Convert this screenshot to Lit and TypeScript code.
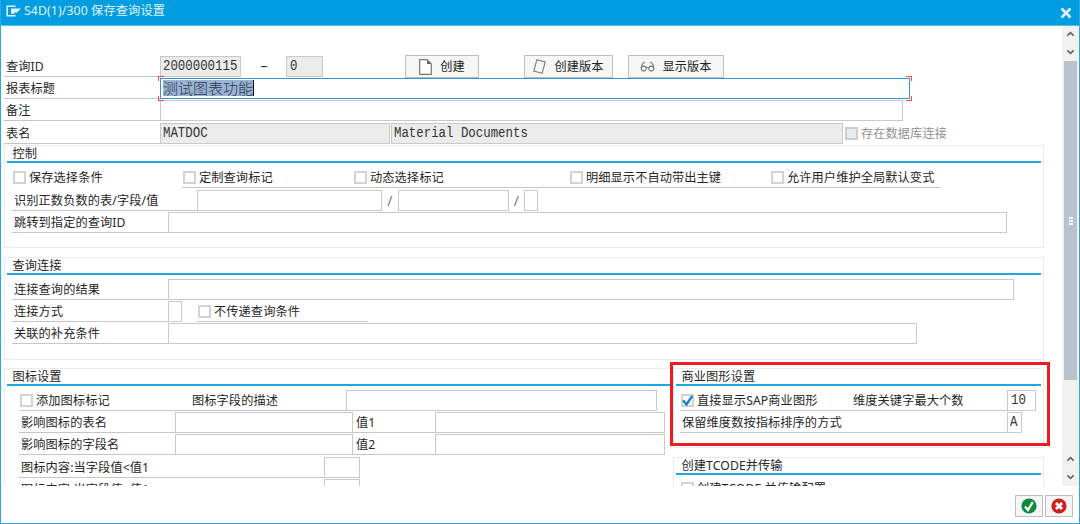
import { LitElement, html, css, nothing } from "lit";
import { customElement, property } from "lit/decorators.js";
import { styleMap } from "lit/directives/style-map.js";

type Kind = "label" | "plain" | "field" | "locked" | "check" | "slash" | "dash";
interface Cell {
  kind: Kind;
  w: number;
  gap?: number;
  text?: string;
  pad?: number;
  on?: boolean;
  off?: boolean;
  line?: boolean;
}
interface Row {
  h?: number;
  cells: Cell[];
}

const label = (gap: number, w: number, text = "", pad = 2): Cell => ({ kind: "label", gap, w, text, pad });
const field = (gap: number, w: number, text = "", pad = 2): Cell => ({ kind: "field", gap, w, text, pad });
const check = (gap: number, w: number, text: string, line = true, on = false): Cell => ({
  kind: "check", gap, w, text, line, on,
});

@customElement("form-rows")
class FormRows extends LitElement {
  @property({ attribute: false }) rows: Row[] = [];

  static styles = css`
    :host { display: block; }
    .row { display: flex; align-items: flex-end; height: 22px; }
    .cell { flex: none; box-sizing: border-box; height: 21px; line-height: 21px; white-space: pre; }
    .label, .check { border-bottom: 1px solid transparent; }
    .label, .line { border-bottom-color: #c6c6c6; }
    .field, .locked {
      border: 1px solid #c9c9c9;
      background: #fff;
      padding-left: 2px;
      font: 12.4px/21px "Liberation Mono", "Noto Sans CJK SC", monospace;
      letter-spacing: 0;
      color: #333;
    }
    .value { display: inline-block; transform: scaleY(1.16); }
    .locked { background: #ebebeb; }
    .slash, .dash { text-align: center; color: #777; font-size: 14px; }
    .dash { color: #333; line-height: 19px; }
    .check { display: flex; align-items: center; gap: 3px; padding-top: 1px; }
    .box {
      flex: none; box-sizing: border-box; width: 13px; height: 13px;
      border: 2px solid #d2d2d2; background: #fff; margin-left: 1px;
    }
    .tick { display: block; width: 13px; height: 13px; margin: -2px; }
    .off { color: #8f8f94; }
    .off .box { background: #e6ebef; border-color: #cdcdcd; }
  `;

  private cell(c: Cell) {
    const size = { width: `${c.w}px`, marginLeft: `${c.gap ?? 0}px`, paddingLeft: c.pad ? `${c.pad}px` : null };
    if (c.kind === "check") {
      return html`<div class="cell check ${c.line ? "line" : ""} ${c.off ? "off" : ""}" style=${styleMap(size)}>
        <span class="box">${c.on
          ? html`<svg class="tick" viewBox="0 0 13 13"><path d="M2 6.2 5.5 10.5 11.3 1.8" fill="none" stroke="#1584cc" stroke-width="2.4"/></svg>`
          : nothing}</span><span>${c.text}</span>
      </div>`;
    }
    if (c.kind === "field" || c.kind === "locked") {
      return html`<div class="cell ${c.kind}" style=${styleMap(size)}><span class="value">${c.text}</span></div>`;
    }
    return html`<div class="cell ${c.kind}" style=${styleMap(size)}>${c.text}</div>`;
  }

  render() {
    return this.rows.map(
      (r) => html`<div class="row" style=${styleMap({ height: r.h ? `${r.h}px` : null })}>${r.cells.map((c) => this.cell(c))}</div>`
    );
  }
}

@customElement("form-group")
class FormGroup extends LitElement {
  @property() heading = "";

  static styles = css`
    :host { display: block; box-sizing: border-box; border: 1px solid #ebebeb; }
    .head {
      height: 15px; line-height: 16px; margin: 0 2px; padding-left: 5.5px;
      border-bottom: 2px solid #1ea6e3; white-space: nowrap;
    }
    .body { padding-top: 3px; }
  `;

  render() {
    return html`<div class="head">${this.heading}</div><div class="body"><slot></slot></div>`;
  }
}

const idRow: Row[] = [{
  cells: [
    label(0, 156, "查询ID"),
    { kind: "locked", w: 81, text: "2000000115" },
    { kind: "dash", w: 14, gap: 16, text: "–" },
    { kind: "locked", w: 37, gap: 15, text: "0", pad: 3 },
  ],
}];

const tailRows: Row[] = [
  { cells: [label(0, 156, "备注"), field(0, 743)] },
  {
    h: 23,
    cells: [
      label(0, 156, "表名"),
      { kind: "locked", w: 230, text: "MATDOC" },
      { kind: "locked", w: 452, gap: 1, text: "Material Documents" },
      { kind: "check", w: 110, gap: 1, text: "存在数据库连接", off: true },
    ],
  },
];

const controlRows: Row[] = [
  {
    cells: [
      check(7, 170, "保存选择条件", false),
      check(0, 171, "定制查询标记"),
      check(0, 216, "动态选择标记"),
      check(0, 201, "明细显示不自动带出主键"),
      check(0, 171, "允许用户维护全局默认变式"),
    ],
  },
  {
    h: 23,
    cells: [
      label(7, 185, "识别正数负数的表/字段/值"),
      field(0, 185),
      { kind: "slash", w: 16, text: "/" },
      field(0, 111),
      { kind: "slash", w: 15, text: "/" },
      field(0, 14),
    ],
  },
  { cells: [label(7, 156, "跳转到指定的查询ID"), field(0, 839)] },
];

const linkRows: Row[] = [
  { cells: [label(7, 156, "连接查询的结果"), field(0, 846)] },
  { cells: [label(7, 156, "连接方式"), field(0, 14), check(15, 171, "不传递查询条件")] },
  { cells: [label(7, 156, "关联的补充条件"), field(0, 749)] },
];

const iconRows: Row[] = [
  { cells: [check(14, 172, "添加图标标记"), label(0, 155, "图标字段的描述", 1), field(0, 311)] },
  { cells: [label(14, 156, "影响图标的表名"), field(0, 178), label(0, 82, "值1", 3), field(0, 230)] },
  { cells: [label(14, 156, "影响图标的字段名"), field(0, 178), label(0, 82, "值2", 3), field(0, 230)] },
  { h: 23, cells: [label(14, 305, "图标内容:当字段值<值1"), field(0, 36)] },
  { cells: [label(14, 305, "图标内容:当字段值=值1"), field(0, 36)] },
];

const chartRows: Row[] = [
  { cells: [check(6, 172, "直接显示SAP商业图形", true, true), label(0, 155, "维度关键字最大个数", 1), field(0, 29, "10", 3)] },
  { cells: [label(6, 327, "保留维度数按指标排序的方式"), field(0, 15, "A")] },
];

const tcodeRows: Row[] = [{ h: 21, cells: [check(6, 200, "创建TCODE 并传输配置", false)] }];

const chevron = (d: string) =>
  html`<svg class="chev" viewBox="0 0 9 6"><path d=${d} fill="none" stroke="#606469" stroke-width="1.6" /></svg>`;
const UP = "M1.3 4.7 4.5 1.7 7.7 4.7";
const DOWN = "M1.3 1.3 4.5 4.3 7.7 1.3";

@customElement("app-root")
class AppRoot extends LitElement {
  static styles = css`
    :host {
      display: flex; flex-direction: column; box-sizing: border-box;
      width: 1080px; height: 524px; overflow: hidden; background: #fff;
      border: 1px solid #2aaae2; border-top: 0;
      font-family: "Noto Sans", "Noto Sans CJK SC", sans-serif;
      font-size: 12.2px; letter-spacing: 0.1px; color: #262626;
    }
    svg { display: block; flex: none; }
    .titlebar {
      flex: none; box-sizing: border-box; height: 26px; margin: 0 -1px; padding: 0 8px 3px 6px;
      display: flex; align-items: center; gap: 3px;
      background: #009de0; border-bottom: 1px solid #55bdea; color: #e4f2f9; line-height: 16px;
    }
    .title { flex: 1; letter-spacing: 0.15px; }
    .logo { width: 15px; height: 12px; }
    .close { width: 12px; height: 12px; margin-top: 3px; }
    .main { flex: none; display: flex; height: 460px; overflow: hidden; }
    .page { flex: none; width: 1061px; box-sizing: border-box; padding: 29px 0 0 3px; position: relative; }
    .line { display: flex; height: 22px; }
    .line.title-line { align-items: flex-end; }
    .caption {
      flex: none; box-sizing: border-box; width: 156px; height: 21px; padding-left: 2px;
      line-height: 21px; border-bottom: 1px solid #c6c6c6;
    }
    .focus {
      position: relative; box-sizing: border-box; width: 750px; height: 21px;
      border: 1px solid #3796d1; padding: 1px 0 0 2px; display: flex;
    }
    .picked {
      height: 16px; line-height: 16px; font-family: "Noto Sans CJK SC", sans-serif; letter-spacing: 0;
      font-size: 15px; font-weight: 300; color: #29374a; background: #9ab3d3; border-right: 1px solid #111;
    }
    .corner { position: absolute; width: 5px; height: 4px; border: 0 solid #f0484f; }
    .tl { left: -3px; top: -3px; border-width: 1px 0 0 1px; }
    .bl { left: -3px; bottom: -3px; border-width: 0 0 1px 1px; }
    .tr { right: -3px; top: -3px; border-width: 1px 1px 0 0; }
    .br { right: -3px; bottom: -3px; border-width: 0 1px 1px 0; }
    .btn {
      flex: none; box-sizing: border-box; height: 23px; display: flex; align-items: center; justify-content: center;
      gap: 8px; border: 1px solid #bdbdbd; background: #f6f6f6; line-height: 20px; color: #222;
    }
    .make { width: 74px; margin-left: 82px; }
    .make-version { width: 89px; margin-left: 45px; }
    .show-version { width: 96px; margin-left: 15px; gap: 7px; }
    .g-control { width: 1040px; height: 103px; margin-top: 1px; }
    .g-link { width: 1040px; height: 103px; margin-top: 9px; }
    .pair { display: flex; width: 1040px; margin-top: 8px; }
    .g-icon { width: 669px; height: 150px; border-right: 0; }
    .side { width: 371px; }
    .g-chart { height: 80px; }
    .g-tcode { height: 60px; margin-top: 9px; }
    .marker {
      position: absolute; left: 669px; top: 336px; box-sizing: border-box; width: 380px; height: 84px;
      border: 3px solid #ed1c24;
    }
    .scroll {
      flex: none; box-sizing: border-box; width: 17px; padding: 5px 0 6px; display: flex; flex-direction: column; align-items: center;
      background: #f1f1f1;
    }
    .chev { width: 9px; height: 6px; margin-bottom: 12px; }
    .chev:last-child { margin-bottom: 0; }
    .thumb {
      flex: none; width: 13px; height: 319px; background: #b7c2ce; margin: -6px 0 auto;
      display: flex; flex-direction: column; align-items: center; justify-content: center; gap: 1px;
    }
    .grip { width: 4px; height: 2px; background: #f2f5f8; }
    .footer { flex: 1; display: flex; justify-content: flex-end; gap: 2px; padding: 9px 6px 0 0; }
    .act { width: 28px; height: 22px; }
    .act svg { width: 16px; height: 16px; }
  `;

  render() {
    return html`
      <div class="titlebar">
        <svg class="logo" viewBox="0 0 15 12">
          <path d="M9.5 1.2H1.2V10.8H9.5" fill="none" stroke="#e4f2f9" stroke-width="1.5" />
          <path d="M5 3.5H15L11 7.5H8.5V8.8H5Z" fill="#e4f2f9" />
        </svg>
        <span class="title">S4D(1)/300 保存查询设置</span>
        <svg class="close" viewBox="0 0 12 12"><path d="M1.5 1.5 10.5 10.5M10.5 1.5 1.5 10.5" stroke="#e4eef4" stroke-width="2.6" /></svg>
      </div>
      <div class="main">
        <div class="page">
          <div class="line">
            <form-rows .rows=${idRow}></form-rows>
            <div class="btn make">
              <svg width="13" height="16" viewBox="0 0 13 16">
                <path d="M.7.7H8L12.3 5V15.3H.7Z" fill="#fff" stroke="#777" stroke-width="1.2" /><path d="M8 .7V5H12.3Z" fill="#666" />
              </svg>
              <span>创建</span>
            </div>
            <div class="btn make-version">
              <svg width="13" height="15" viewBox="0 0 13 15"><path d="M3.8.8 12.2 3 9.2 14.2.8 12Z" fill="none" stroke="#777" stroke-width="1.1" /></svg>
              <span>创建版本</span>
            </div>
            <div class="btn show-version">
              <svg width="15" height="11" viewBox="0 0 15 11">
                <g fill="none" stroke="#777" stroke-width="1.1">
                  <circle cx="3.7" cy="7.6" r="2.5" /><circle cx="11.3" cy="7.6" r="2.5" />
                  <path d="M1.2 7Q1.8 2.2 5 .9M13.8 7Q13.2 2.2 10 .9M6.2 7Q7.5 6 8.8 7" />
                </g>
              </svg>
              <span>显示版本</span>
            </div>
          </div>
          <div class="line title-line">
            <div class="caption">报表标题</div>
            <div class="focus">
              <span class="picked">测试图表功能</span>
              <i class="corner tl"></i><i class="corner bl"></i><i class="corner tr"></i><i class="corner br"></i>
            </div>
          </div>
          <form-rows .rows=${tailRows}></form-rows>
          <form-group class="g-control" heading="控制"><form-rows .rows=${controlRows}></form-rows></form-group>
          <form-group class="g-link" heading="查询连接"><form-rows .rows=${linkRows}></form-rows></form-group>
          <div class="pair">
            <form-group class="g-icon" heading="图标设置"><form-rows .rows=${iconRows}></form-rows></form-group>
            <div class="side">
              <form-group class="g-chart" heading="商业图形设置"><form-rows .rows=${chartRows}></form-rows></form-group>
              <form-group class="g-tcode" heading="创建TCODE并传输"><form-rows .rows=${tcodeRows}></form-rows></form-group>
            </div>
          </div>
          <div class="marker"></div>
        </div>
        <div class="scroll">
          ${chevron(UP)}${chevron(DOWN)}
          <div class="thumb"><i class="grip"></i><i class="grip"></i><i class="grip"></i></div>
          ${chevron(UP)}${chevron(DOWN)}
        </div>
      </div>
      <div class="footer">
        <div class="btn act">
          <svg viewBox="0 0 16 16"><circle cx="8" cy="8" r="7.6" fill="#0b8a3c" /><path d="M4 8.5 7 12 11.8 4" fill="none" stroke="#fff" stroke-width="2.3" /></svg>
        </div>
        <div class="btn act">
          <svg viewBox="0 0 16 16"><circle cx="8" cy="8" r="7.6" fill="#cf1f22" /><path d="M5 5 11 11M11 5 5 11" stroke="#fff" stroke-width="2.8" /></svg>
        </div>
      </div>
    `;
  }
}
